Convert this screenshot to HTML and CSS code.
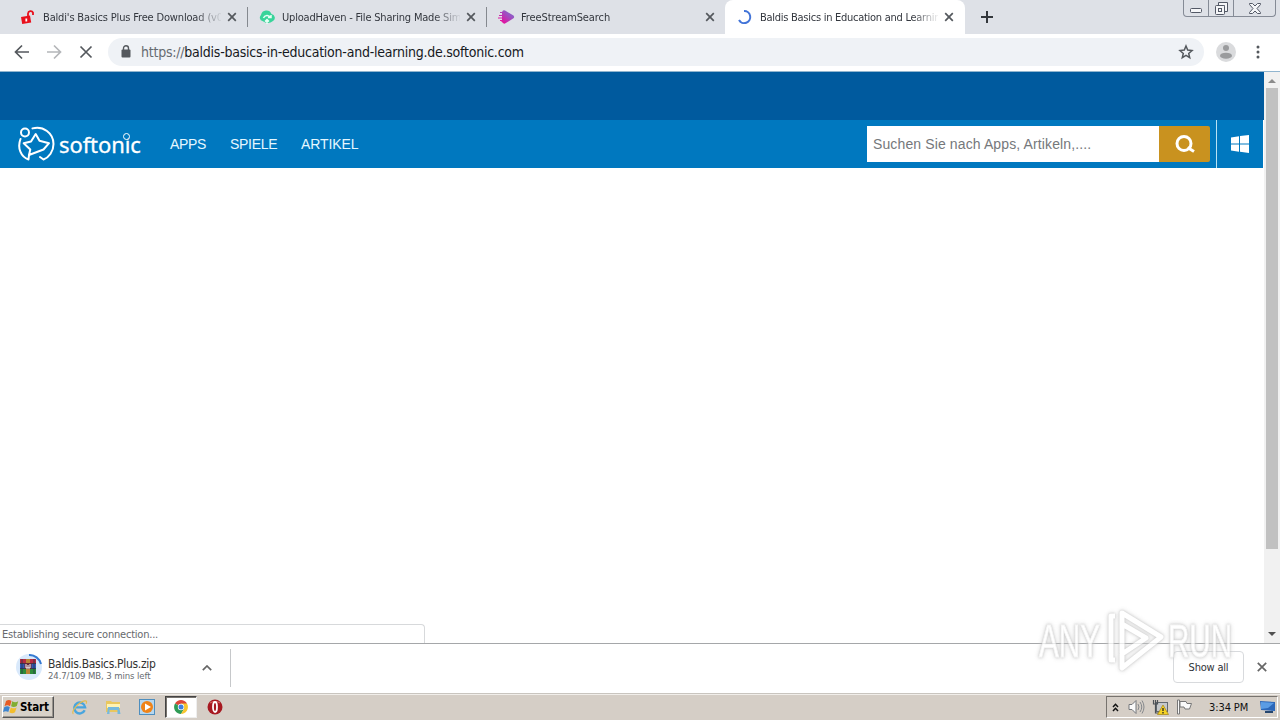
FILE: index.html
```html
<!DOCTYPE html>
<html lang="de">
<head>
<meta charset="utf-8">
<title>Baldis Basics in Education and Learning</title>
<link rel="stylesheet" href="styles.css">
</head>
<body>
<div class="desktop">
  <header class="tabstrip">
    <div class="tab">
      <svg class="fav" viewBox="0 0 16 16"><path d="M1 8l9-1.500 1.200 7-9 1.500z" fill="#e8101c"/><path d="M8 7V4.500a2.600 2.600 0 0 1 5-.8V6" fill="none" stroke="#e8101c" stroke-width="1.800"/><path d="M6.300 9.500v3" stroke="#fff" stroke-width="1.800"/></svg>
      <span class="title t1">Baldi's Basics Plus Free Download (v0</span>
      <svg class="close" viewBox="0 0 10 10"><path d="M1.200 1.200l7.600 7.600M8.800 1.200L1.200 8.800"/></svg>
    </div>
    <div class="tab">
      <svg class="fav" viewBox="0 0 16 16"><path d="M3.500 12A3.500 3.500 0 0 1 2 6 5.500 5.500 0 0 1 12.500 5a3.800 3.800 0 0 1 1.500 7q-5 4-10.500 0z" fill="#38d49a"/><path d="M4.500 9a3.800 3.800 0 0 1 7-.5M9 8.500h3V6M8 15v-4M6 12.500l2-2 2 2" fill="none" stroke="#e6fff5" stroke-width="1.500"/></svg>
      <span class="title t2">UploadHaven - File Sharing Made Sim</span>
      <svg class="close" viewBox="0 0 10 10"><path d="M1.200 1.200l7.600 7.600M8.800 1.200L1.200 8.800"/></svg>
    </div>
    <div class="tab plain">
      <svg class="fav wide" viewBox="0 0 18 16"><defs><linearGradient id="fs" x1="0" x2="1" y1="1" y2="0"><stop offset=".2" stop-color="#e312a0"/><stop offset=".6" stop-color="#a14cc0"/><stop offset="1" stop-color="#7779cf"/></linearGradient></defs><path d="M6 1.500q1-.5 2 0l8.500 5q1.300 1.500 0 2.800L8 14.500q-1.500.5-2.500-1L4 12H3v-1h2V9.500H1v-1h4V7H2V6h3V4H3V3h2z" fill="url(#fs)"/></svg>
      <span class="title t3">FreeStreamSearch</span>
      <svg class="close" viewBox="0 0 10 10"><path d="M1.200 1.200l7.600 7.600M8.800 1.200L1.200 8.800"/></svg>
    </div>
    <div class="tab active">
      <svg class="fav" viewBox="0 0 16 16"><path d="M7 2.100a6 6 0 1 1-5 8.900" fill="none" stroke="#4274d8" stroke-width="2"/></svg>
      <span class="title t4">Baldis Basics in Education and Learnin</span>
      <svg class="close" viewBox="0 0 10 10"><path d="M1.200 1.200l7.600 7.600M8.800 1.200L1.200 8.800"/></svg>
    </div>
    <svg class="newtab" viewBox="0 0 12 12"><path d="M6 0v12M0 6h12"/></svg>
    <div class="winbtns">
      <span class="wb min"><svg width="13" height="6" viewBox="0 0 13 6"><rect x=".5" y=".5" width="11" height="4" rx="1"/></svg></span>
      <span class="wb max"><svg width="13" height="13" viewBox="0 0 13 13"><path d="M3.500 3.500v-3h9v9h-3M3.500 3.500h6v6"/><rect x=".5" y="3.500" width="9" height="9" rx="1"/><rect x="3.500" y="6.500" width="3" height="3"/></svg></span>
      <span class="wb x"><svg width="12" height="11" viewBox="0 0 12 11"><path d="M.5.500h3L6 3 8.500.5h3v1L8 5.500l3.500 4v1h-3L6 8l-2.500 2.500h-3v-1L4 5.500.5 1.500z"/></svg></span>
    </div>
  </header>

  <div class="toolbar">
    <svg class="nav" viewBox="0 0 16 16"><path d="M15 8H2M8 1.500L1.500 8 8 14.500"/></svg>
    <svg class="nav dim" viewBox="0 0 16 16"><path d="M1 8h13M8 1.500L14.500 8 8 14.500"/></svg>
    <svg class="nav" viewBox="0 0 16 16"><path d="M2.500 2.500l11 11M13.500 2.500l-11 11"/></svg>
    <div class="omnibox">
      <svg width="10" height="13" viewBox="0 0 10 13"><rect x=".5" y="4.500" width="9" height="8" rx="1" fill="#54585d"/><path d="M2.500 5V3.200a2.500 2.500 0 0 1 5 0V5" fill="none" stroke="#54585d" stroke-width="1.400"/></svg>
      <span class="url"><span class="scheme">https://</span>baldis-basics-in-education-and-learning.de.softonic.com</span>
      <svg class="star" width="16" height="16" viewBox="0 0 16 16"><path d="M8 2l1.700 4.100 4.300.4-3.300 2.900 1 4.300L8 11.400l-3.700 2.300 1-4.300L2 6.500l4.300-.4z"/></svg>
    </div>
    <svg class="avatar" viewBox="0 0 20 20"><circle cx="10" cy="10" r="10" fill="#dadbdd"/><circle cx="10" cy="6" r="3" fill="#9a9b9d"/><ellipse cx="10" cy="13.700" rx="6" ry="3" fill="#9a9b9d"/></svg>
    <svg class="more" viewBox="0 0 4 14"><circle cx="2" cy="2" r="1.500"/><circle cx="2" cy="7" r="1.500"/><circle cx="2" cy="12" r="1.500"/></svg>
  </div>

  <div class="viewport">
    <main class="page">
      <div class="adbar"></div>
      <nav class="sitebar">
        <a class="logo">
          <svg width="37" height="36" viewBox="0 0 37 36"><g fill="none" stroke="#fff" stroke-width="2" stroke-linejoin="round" stroke-linecap="round"><circle cx="7" cy="6.500" r="4"/><path d="M14.500 2.400C25-.5 35.500 7 35.500 18c0 7.500-4.500 13.500-10 15.500l-3.500-2.500"/><path d="M2.500 13C-1 22 3 31 10.500 33.500L11 29"/><path d="M11 29l1.300-5.500L5.700 17.300l7.300-1.800L17.700 8l3.800 6.700 9.500 2.500-5.500 6.300z"/></g></svg>
          <span class="brand">softonic<i></i></span>
        </a>
        <a class="link l1">APPS</a><a class="link l2">SPIELE</a><a class="link l3">ARTIKEL</a>
        <div class="search"><span>Suchen Sie nach Apps, Artikeln,....</span></div>
        <div class="go"><svg width="20" height="19" viewBox="0 0 20 19"><circle cx="9" cy="8.500" r="7" fill="none" stroke="#fff" stroke-width="3"/><path d="M12.500 12.500l6.500 4" stroke="#fff" stroke-width="3"/></svg></div>
        <div class="platform"><svg width="18" height="18" viewBox="0 0 18 18" fill="#fff"><path d="M0 2.500l8-1.200v7.200H0zM9 1.100L18 0v8.500H9zM0 9.500h8v7.200l-8-1.200zM9 9.500h9V18l-9-1.200z"/></svg></div>
      </nav>
      <div class="status"><span>Establishing secure connection...</span></div>
    </main>
    <div class="scroll">
      <svg width="8" height="4" viewBox="0 0 8 4"><path d="M0 4l4-4 4 4z" fill="#8b8b8b"/></svg>
      <div class="thumb"></div>
      <svg class="down" width="8" height="4" viewBox="0 0 8 4"><path d="M0 0l4 4 4-4z" fill="#505050"/></svg>
    </div>
  </div>

  <footer class="downloads">
    <svg class="zip" width="26" height="26" viewBox="0 0 26 26"><circle cx="13" cy="13" r="13" fill="#d9e9fb"/><path d="M13 1a12 12 0 0 1 12 9" fill="none" stroke="#357ad2" stroke-width="2"/><path d="M4 5h16v5H4z" fill="#b52b43"/><path d="M4 10h16v5H4z" fill="#3157b5"/><path d="M4 15h16v5H4z" fill="#2d8b3a"/><path d="M4 9.500h16M4 14.500h16M6 5v15M18 5v15" stroke="#27364a" stroke-width=".8"/><path d="M10 5h4v15h-4z" fill="#b98335"/><rect x="8.500" y="9" width="7" height="6" fill="#642838"/><path d="M10 10v4h4v-4M12 11v3" stroke="#fff" fill="none"/></svg>
    <div class="file"><span class="name">Baldis.Basics.Plus.zip</span><span class="meta">24.7/109 MB, 3 mins left</span></div>
    <svg class="chev" width="10" height="6" viewBox="0 0 10 6"><path d="M.8 5.200L5 1l4.200 4.200"/></svg>
    <div class="rule"></div>
    <button class="showall"><span>Show all</span></button>
    <svg class="dclose" width="10" height="10" viewBox="0 0 10 10"><path d="M.8.800l8.400 8.400M9.200.8L.8 9.200"/></svg>
  </footer>

  <div class="taskbar">
    <div class="start"><svg width="17" height="16" viewBox="0 0 17 16"><path d="M3 2q3-2 5.500 0L7 7.200q-2.500-1.700-5.500 0z" fill="#e65b25"/><path d="M9.200 2.300q3 1.700 6 0L13.800 7q-3 1.800-5.700.3z" fill="#81ad31"/><path d="M1.200 8.200q3-1.800 5.600 0L5.300 13Q3 11.500 0 13z" fill="#3d84cf"/><path d="M7.800 8.400q3 1.700 5.800 0L12 13.200q-3 2-5.600 0z" fill="#f3bd2c"/></svg><b>Start</b></div>
    <div class="quick">
      <span class="app"><svg width="17" height="17" viewBox="0 0 18 18"><path d="M14.500 12A5.800 5.800 0 1 1 15 8.900H5" fill="none" stroke="#48a5de" stroke-width="2.500"/><path d="M2.500 16C-.5 14 7 3.500 14.500 2q3-.5 1.500 3" fill="none" stroke="#e3bd52" stroke-width="1.300"/></svg></span>
      <span class="app"><svg width="17" height="16" viewBox="0 0 17 16"><path d="M1 2h5l1 1h8v10H1z" fill="#e9c75f"/><path d="M2 5h13v4H2z" fill="#fff3b3"/><path d="M3 8h11l1.500 7h-3v-4h-8v4H2z" fill="#75b9de"/></svg></span>
      <span class="app"><svg width="16" height="16" viewBox="0 0 16 16"><rect x=".5" y=".5" width="15" height="15" fill="#b6d7ef" stroke="#4e8ebe"/><circle cx="8" cy="8" r="6" fill="#ef8318"/><path d="M6 4.500l6 3.500-6 3.500z" fill="#fff"/></svg></span>
      <span class="app pressed"><svg width="14" height="14" viewBox="0 0 14 14"><path d="M7 7L1 3.500A7 7 0 0 1 13 3.500z" fill="#dd4638"/><path d="M7 7L1 3.500A7 7 0 0 0 7 14l3-5z" fill="#2f9c56"/><path d="M7 7l3 2-3 5A7 7 0 0 0 13 3.500H7z" fill="#f7c52e"/><circle cx="7" cy="7" r="3.200" fill="#fff"/><circle cx="7" cy="7" r="2.500" fill="#3f7fe0"/></svg></span>
      <span class="app"><svg width="16" height="16" viewBox="0 0 16 16"><circle cx="8" cy="8" r="7.500" fill="#a71921"/><path d="M3 4a7 5 0 0 1 10 0" stroke="#df6b69" fill="none"/><ellipse cx="8" cy="8" rx="2" ry="5" fill="#a71921" stroke="#fff" stroke-width="1.800"/></svg></span>
    </div>
    <div class="tray">
      <svg width="7" height="9" viewBox="0 0 7 9"><path d="M1 4l2.500-2.700L6 4M1 8l2.500-2.700L6 8" fill="none" stroke="#111" stroke-width="1.500"/></svg>
      <svg class="snd" width="17" height="16" viewBox="0 0 17 16"><path d="M1 5.500h3L8 1.500v13l-4-4H1z" fill="#fafafa" stroke="#74777b"/><path d="M10 5q2 3 0 6M12 3q3.500 5 0 10M14 1.500q4 6.500 0 13" fill="none" stroke="#85888c"/></svg>
      <svg class="net" width="17" height="16" viewBox="0 0 17 16"><rect x="4.500" y="3.500" width="11" height="9" fill="#c5c8cb" stroke="#626970"/><path d="M1.500 1v4h4V1M3.500 1v13h4" fill="none" stroke="#4c5157" stroke-width="1.200"/><path d="M11 6l5.500 9.500h-11z" fill="#f5d323" stroke="#a38210" stroke-width=".7"/><path d="M11 9v3M11 13v1.500" stroke="#222" stroke-width="1.300"/></svg>
      <svg class="flag" width="17" height="16" viewBox="0 0 17 16"><path d="M1.500 1v14h2V1z" fill="#fafafa" stroke="#777"/><path d="M4 2.500h6l1 2h4.500l-2 5.500H9l-1-2H4z" fill="#fafafa" stroke="#777"/></svg>
      <span class="clock">3:34 PM</span>
      <svg class="desk" width="16" height="14" viewBox="0 0 16 14"><path d="M0 1l15 1v9L1 10z" fill="#2c67b9"/><path d="M1 2l13 1-6 5-7 1z" fill="#5b9ce4"/><path d="M5 11h8v2H5z" fill="#26466e"/></svg>
    </div>
  </div>

  <svg class="watermark" width="204" height="72" viewBox="0 0 204 72">
    <g class="mark"><text x="5" y="53" textLength="61" lengthAdjust="spacingAndGlyphs">ANY</text><text x="134" y="53" textLength="64" lengthAdjust="spacingAndGlyphs">RUN</text>
    <path d="M81 12h-4v44h4"/><path d="M88 49V9l39 24-39 31V50l24-16-24-14"/></g>
  </svg>
</div>
</body>
</html>
```
FILE: styles.css
```css
* { box-sizing: border-box; }
body { margin: 0; overflow: hidden; background: #fff; font-family: "DejaVu Sans Condensed", "DejaVu Sans", sans-serif; font-stretch: condensed; }
svg { display: block; flex: none; }
.desktop { width: 1280px; height: 720px; display: flex; flex-direction: column; position: relative; }

.tabstrip { height: 34px; background: #dee1e7; display: flex; padding-left: 8px; flex: none; }
.tab { width: 239px; height: 34px; display: flex; align-items: center; padding: 0 12px; position: relative; flex: none; }
.tab::after { content: ""; width: 1px; height: 20px; background: #85898f; position: absolute; right: -1px; top: 7px; }
.tab.plain::after { display: none; }
.tab.active { width: 240px; background: #fff; border-radius: 8px 8px 0 0; padding-right: 13px; }
.tab.active::after { display: none; }
.fav { width: 16px; height: 16px; margin-right: 7px; }
.fav.wide { width: 18px; margin-left: -1px; margin-right: 6px; }
.title { font-size: 11px; line-height: 16px; padding-top: 1px; color: #33373e; width: 178px; white-space: nowrap; mask-image: linear-gradient(90deg, #000 152px, transparent 180px); }
.t1 { letter-spacing: -.16px; }
.t2 { letter-spacing: -.19px; }
.t3 { letter-spacing: -.1px; }
.t4 { letter-spacing: -.27px; }
.close { width: 10px; height: 10px; margin-left: auto; margin-right: -2px; }
.close path { stroke: #54585d; stroke-width: 1.7; }
.newtab { width: 12px; height: 12px; margin: 11px 0 0 16px; }
.newtab path { stroke: #33373c; stroke-width: 2; }
.winbtns { display: flex; height: 17px; margin-left: auto; margin-right: 4px; border: 1px solid #858b96; border-top: 0; border-radius: 0 0 4px 4px; }
.wb { display: flex; align-items: center; justify-content: center; width: 25px; border-right: 1px solid #858b96; }
.wb.x { width: 41px; border: 0; }
.wb.min { padding-top: 5px; }
.wb svg { fill: #f5f6f8; stroke: #535966; }

.toolbar { height: 38px; border-bottom: 1px solid #91b5cf; background: #fff; display: flex; align-items: center; padding: 0 0 2px 14px; flex: none; }
.nav { width: 16px; height: 16px; margin-right: 16px; }
.nav path { fill: none; stroke: #54585d; stroke-width: 1.7; }
.nav.dim path { stroke: #b4b6b9; }
.omnibox { width: 1096px; height: 28px; margin-left: -2px; border-radius: 14px; background: #eff2f6; display: flex; align-items: center; padding: 0 10px 0 13px; }
.url { margin-left: 10px; font-family: "DejaVu Sans Condensed", sans-serif; font-size: 14px; color: #16191d; letter-spacing: -.235px; white-space: nowrap; }
.scheme { color: #666b70; }
.star { margin-left: auto; }
.star path { fill: none; stroke: #54585d; stroke-width: 1.5; }
.avatar { width: 20px; height: 20px; margin-left: 12px; }
.more { width: 4px; height: 14px; margin-left: 20px; fill: #54585d; }

.viewport { height: 571px; flex: none; display: flex; }
.page { width: 1264px; display: flex; flex-direction: column; }
.adbar { height: 48px; background: #005a9e; }
.sitebar { height: 48px; width: 1263px; background: #0078bf; display: flex; align-items: center; }
.logo { display: flex; align-items: center; margin-left: 18px; width: 152px; height: 48px; }
.brand { position: relative; margin-left: 4px; color: #fff; font: 22px/30px "Noto Sans", sans-serif; letter-spacing: -.1px; -webkit-text-stroke: .3px #fff; }
.brand i { position: absolute; left: 64px; top: 4px; width: 7px; height: 7px; border: 1.5px solid #fff; border-radius: 50%; background: #0078bf; }
.link { font: 14px/18px "Liberation Sans", sans-serif; color: #e5f7ff; white-space: nowrap; }
.l1 { width: 60px; letter-spacing: -.3px; } .l2 { width: 71px; letter-spacing: -.3px; } .l3 { letter-spacing: -.1px; }
.search { margin-left: auto; width: 292px; height: 36px; background: #fff; display: flex; align-items: center; padding-left: 6px; font: 14px "Liberation Sans", sans-serif; color: #75787b; letter-spacing: .12px; white-space: nowrap; }
.go { width: 51px; height: 36px; background: #c9921f; border-radius: 0 2px 2px 0; display: flex; align-items: center; justify-content: center; }
.platform { margin-left: 6px; width: 47px; height: 48px; border-left: 1px solid #b9e2f4; display: flex; align-items: center; justify-content: center; }
.status { margin-top: auto; width: 425px; height: 19px; border: 1px solid #d7d9db; border-left: 0; border-bottom: 0; border-radius: 0 4px 0 0; font-size: 11px; line-height: 19px; padding-left: 2px; color: #67696d; letter-spacing: -.21px; }
.scroll { width: 16px; background: #f1f1f1; display: flex; flex-direction: column; align-items: center; padding: 7px 0; }
.thumb { width: 12px; height: 461px; background: #c1c1c1; margin-top: 5px; }
.down { margin-top: auto; }

.downloads { height: 50px; border-top: 1px solid #a5a7a9; background: #fff; display: flex; align-items: center; flex: none; padding: 0 13px 2px 16px; }
.zip { margin-top: -2px; }
.file { width: 140px; margin-left: 6px; display: flex; flex-direction: column; padding-top: 3px; white-space: nowrap; }
.name { font-size: 12px; line-height: 13px; color: #333; letter-spacing: -.32px; }
.meta { font-size: 9.500px; line-height: 10px; color: #686b70; letter-spacing: -.1px; }
.chev { margin-left: 14px; }
.chev path, .dclose path { fill: none; stroke: #666; stroke-width: 1.7; }
.rule { width: 1px; height: 38px; background: #c6c8ca; margin-left: 18px; }
.showall { margin-left: auto; margin-top: -1px; width: 71px; height: 32px; border: 1px solid #d8dadd; border-radius: 4px; background: #fff; padding: 0; font: 11px "DejaVu Sans Condensed", sans-serif; letter-spacing: -.2px; color: #303338; }
.dclose { margin-left: 13px; margin-top: -1px; }

.taskbar { height: 27px; background: #d5cec6; border-top: 1px solid #c9c5bf; box-shadow: inset 0 1px #f1eeea; display: flex; align-items: flex-start; padding: 2px 2px 0 2px; }
.start { width: 52px; height: 22px; background: #d7d1c8; border: 1px solid #fff; border-right-color: #555; border-bottom-color: #555; box-shadow: inset -1px -1px #99948d; display: flex; align-items: center; padding-left: 0; font-size: 11.500px; letter-spacing: -.1px; }
.quick { display: flex; margin-left: 8px; }
.app { width: 34px; height: 22px; display: flex; align-items: center; justify-content: center; }
.pressed { width: 32px; margin: 0 1px; background: #fff; border: 1px solid #444; border-right-color: #eee; border-bottom-color: #eee; box-shadow: inset 1px 1px #77736e; }
.tray { margin-left: auto; width: 172px; height: 22px; border: 1px solid #77736e; border-right-color: #fff; border-bottom-color: #fff; display: flex; align-items: center; padding-left: 5px; }
.snd { margin-left: 9px; } .net { margin-left: 7px; } .flag { margin-left: 7px; }
.clock { margin-left: 16px; font-size: 11px; color: #111; white-space: nowrap; letter-spacing: -.1px; }
.desk { margin-left: auto; margin-right: 1px; }

.watermark { position: absolute; left: 1034px; top: 604px; filter: drop-shadow(0 0 1px #bbb) drop-shadow(0 0 2px #ccc); opacity: .75; }
.mark { fill: #fff; stroke: #f4f4f4; stroke-width: 1; font: 46px "Liberation Sans", sans-serif; }
.mark path { fill: none; stroke: #fff; stroke-width: 5; stroke-linejoin: round; }
```
